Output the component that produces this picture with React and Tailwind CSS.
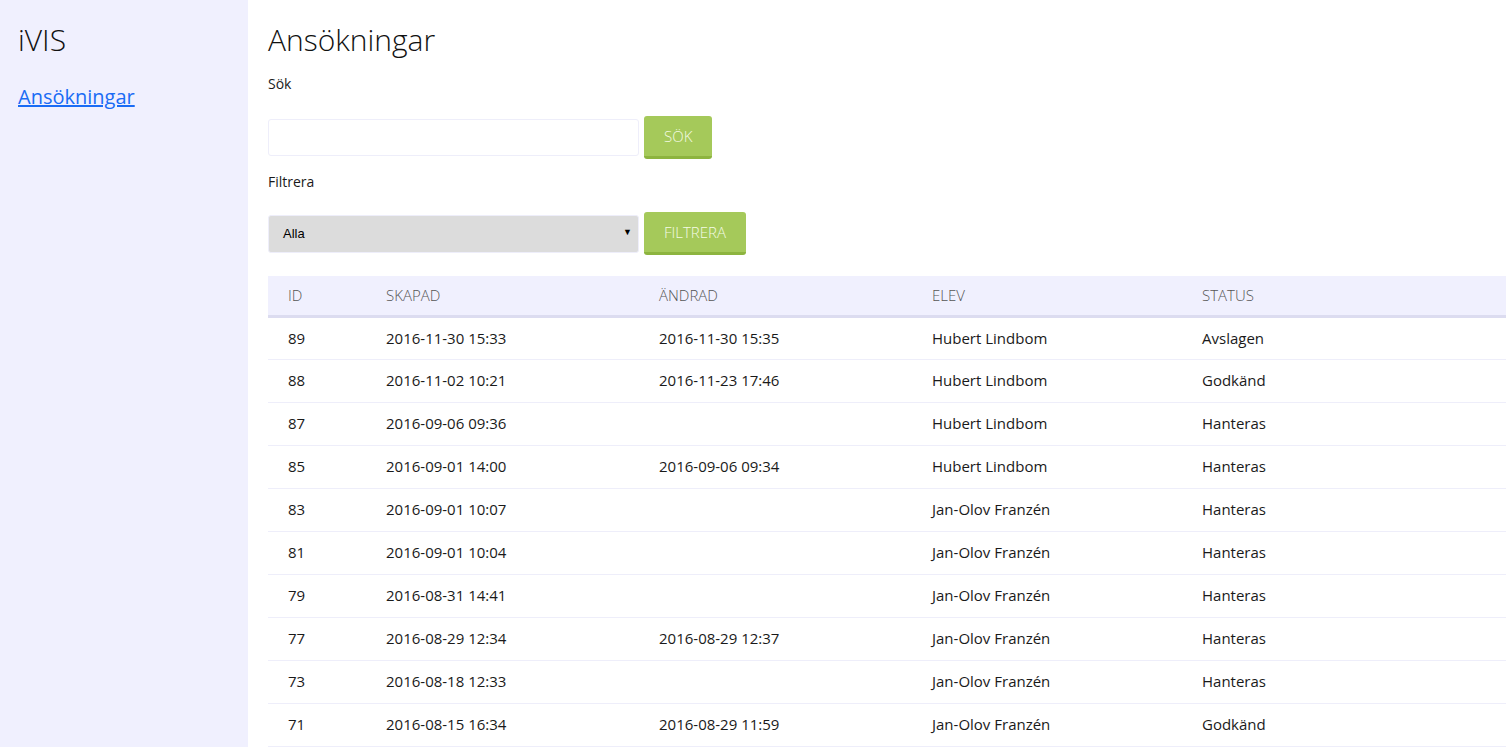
const rows = [
  ["89", "2016-11-30 15:33", "2016-11-30 15:35", "Hubert Lindbom", "Avslagen"],
  ["88", "2016-11-02 10:21", "2016-11-23 17:46", "Hubert Lindbom", "Godkänd"],
  ["87", "2016-09-06 09:36", "", "Hubert Lindbom", "Hanteras"],
  ["85", "2016-09-01 14:00", "2016-09-06 09:34", "Hubert Lindbom", "Hanteras"],
  ["83", "2016-09-01 10:07", "", "Jan-Olov Franzén", "Hanteras"],
  ["81", "2016-09-01 10:04", "", "Jan-Olov Franzén", "Hanteras"],
  ["79", "2016-08-31 14:41", "", "Jan-Olov Franzén", "Hanteras"],
  ["77", "2016-08-29 12:34", "2016-08-29 12:37", "Jan-Olov Franzén", "Hanteras"],
  ["73", "2016-08-18 12:33", "", "Jan-Olov Franzén", "Hanteras"],
  ["71", "2016-08-15 16:34", "2016-08-29 11:59", "Jan-Olov Franzén", "Godkänd"],
];

const cols = ["w-[98px]", "w-[273px]", "w-[273px]", "w-[270px]", ""];

const App = () => {
  return (
    <div className="flex min-h-screen font-['Open_Sans',sans-serif] text-[#1a1a1a]">
      <div className="w-[248px] shrink-0 bg-[#f0f0fe] px-[18px] pt-[22px]">
        <h1 className="text-[30px] font-light leading-[36px] text-[#111]">iVIS</h1>
        <a href="#" className="mt-[25px] block text-[20px] leading-[28px] text-[#1a6cf5] underline">
          Ansökningar
        </a>
      </div>

      <div className="flex-1 pl-[20px] pr-[6px] pt-[22px]">
        <h2 className="text-[30px] font-light leading-[36px] text-[#111]">Ansökningar</h2>

        <div className="mt-[16px] text-[14px] leading-[20px]">Sök</div>
        <div className="mt-[22px] flex items-center gap-[5px]">
          <input className="h-[37px] w-[371px] rounded-[3px] border border-[#eeeefa] bg-white px-3 outline-none" />
          <button className="h-[43px] rounded-[3px] border-b-[3px] border-[#8db43f] bg-[#a5c95a] px-[20px] text-[15px] font-light text-[#f4fbe4]">
            SÖK
          </button>
        </div>

        <div className="mt-[13px] text-[14px] leading-[20px]">Filtrera</div>
        <div className="mt-[20px] flex items-center gap-[5px]">
          <div className="relative flex h-[38px] w-[371px] items-center rounded-[3px] border border-[#eeeefa] bg-[#dcdcdc] pl-[14px] font-['Liberation_Sans',sans-serif] text-[13px] text-black">
            Alla
            <span className="absolute right-[6px] top-[10px] text-[9px]">▼</span>
          </div>
          <button className="h-[43px] rounded-[3px] border-b-[3px] border-[#8db43f] bg-[#a5c95a] px-[20px] text-[15px] font-light text-[#f4fbe4]">
            FILTRERA
          </button>
        </div>

        <table className="mt-[21px] w-full border-collapse text-[15px]">
          <thead>
            <tr className="h-[40px] border-b-[3px] border-[#dcdcf0] bg-[#f0f0fe] text-left text-[#555]">
              {["ID", "SKAPAD", "ÄNDRAD", "ELEV", "STATUS"].map((h, i) => (
                <th key={h} className={`${cols[i]} px-[20px] font-light`}>
                  {h}
                </th>
              ))}
            </tr>
          </thead>
          <tbody>
            {rows.map((r) => (
              <tr key={r[0]} className="h-[43px] border-b border-[#eeeefa]">
                {r.map((c, i) => (
                  <td key={i} className="px-[20px]">
                    {c}
                  </td>
                ))}
              </tr>
            ))}
          </tbody>
        </table>
      </div>
    </div>
  );
};

export default App;
